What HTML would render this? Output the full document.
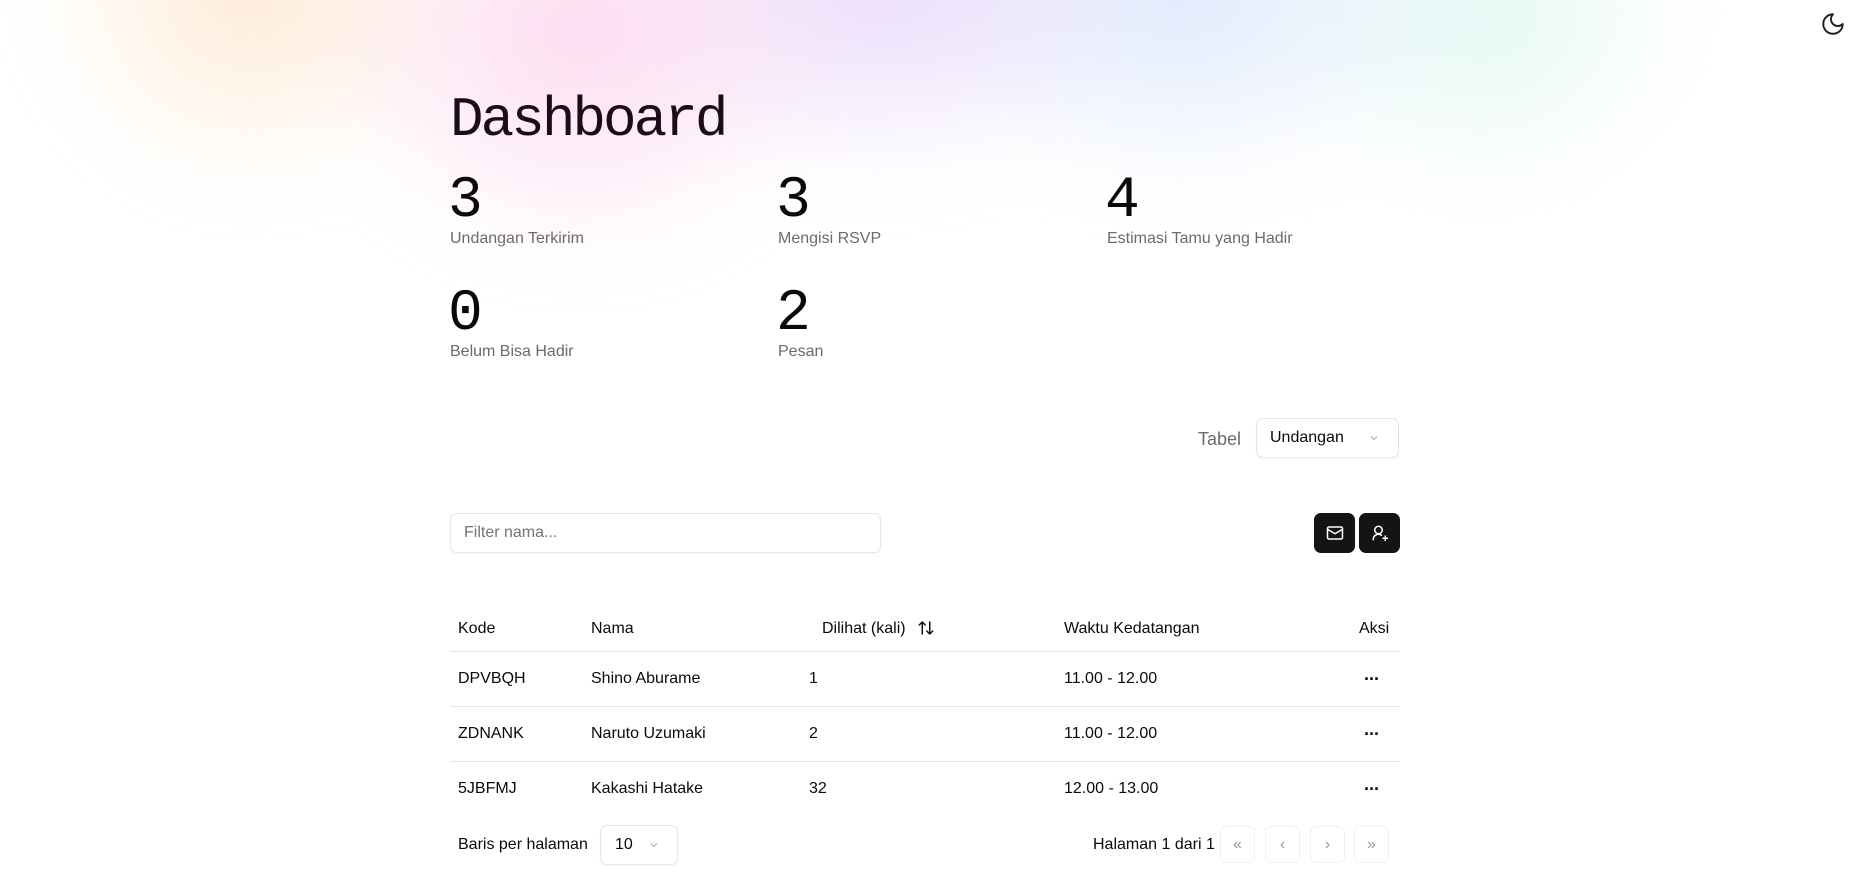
<!DOCTYPE html>
<html><head><meta charset="utf-8"><style>
*{box-sizing:border-box;margin:0;padding:0}
body{width:1857px;height:877px;overflow:hidden;background:#fff;font-family:"Liberation Sans",sans-serif;color:#0a0a0a;position:relative}
.bg{position:absolute;left:0;top:-60px;width:1857px;height:937px;pointer-events:none;
background:
radial-gradient(ellipse 300px 300px at 250px 40px,rgba(255,225,195,.7),transparent 72%),
radial-gradient(ellipse 380px 330px at 580px 90px,rgba(252,210,236,.8),transparent 72%),
radial-gradient(ellipse 380px 290px at 880px 40px,rgba(230,212,250,.85),transparent 72%),
radial-gradient(ellipse 380px 290px at 1180px 50px,rgba(214,228,252,.8),transparent 72%),
radial-gradient(ellipse 300px 260px at 1480px 70px,rgba(218,245,240,.75),transparent 72%);
filter:blur(30px)}
.abs{position:absolute}
.mono{font-family:"Liberation Mono","DejaVu Sans Mono",monospace}
h1{position:absolute;left:450px;top:88px;font-size:56px;font-weight:400;color:#1c0c16;letter-spacing:-3px}
.num{position:absolute;font-size:58px;line-height:58px}
.lbl{position:absolute;font-size:16px;color:#6b6b6b}
.box{position:absolute;border:1px solid #e5e5e5;border-radius:7px;background:#fff;box-shadow:0 1px 2px rgba(0,0,0,.04)}
.t{position:absolute;font-size:16px}
.line{position:absolute;left:450px;width:950px;height:1px;background:#e5e5e5}
.btn{position:absolute;background:#141414;border-radius:7px;width:41px;height:40px;top:513px;display:flex;align-items:center;justify-content:center}
.pg{position:absolute;top:826px;width:35px;height:37px;border:1px solid #f0f0f0;border-radius:6px;color:#9a9a9a;font-size:16px;display:flex;align-items:center;justify-content:center}
.dots{position:absolute;left:1364px;font-size:18px;font-weight:700;letter-spacing:-1px}
</style></head><body>
<div class="bg"></div>
<svg class="abs" style="left:1820px;top:11px" width="26" height="26" viewBox="0 0 24 24" fill="none" stroke="#222" stroke-width="1.8" stroke-linecap="round" stroke-linejoin="round"><path d="M12 3a6 6 0 0 0 9 9 9 9 0 1 1-9-9Z"/></svg>
<h1 class="mono">Dashboard</h1>
<div class="num mono" style="left:448px;top:173px">3</div><div class="lbl" style="left:450px;top:230px">Undangan Terkirim</div>
<div class="num mono" style="left:776px;top:173px">3</div><div class="lbl" style="left:778px;top:230px">Mengisi RSVP</div>
<div class="num mono" style="left:1105px;top:173px">4</div><div class="lbl" style="left:1107px;top:230px">Estimasi Tamu yang Hadir</div>
<div class="num mono" style="left:448px;top:286px">0</div><div class="lbl" style="left:450px;top:343px">Belum Bisa Hadir</div>
<div class="num mono" style="left:776px;top:286px">2</div><div class="lbl" style="left:778px;top:343px">Pesan</div>

<div class="t" style="left:1198px;top:429px;color:#6b6b6b;font-size:18px">Tabel</div>
<div class="box" style="left:1256px;top:418px;width:143px;height:40px"></div>
<div class="t" style="left:1270px;top:429px">Undangan</div>
<svg class="abs" style="left:1368px;top:432px" width="12" height="12" viewBox="0 0 24 24" fill="none" stroke="#aaa" stroke-width="2"><path d="m6 9 6 6 6-6"/></svg>

<div class="box" style="left:450px;top:513px;width:431px;height:40px"></div>
<div class="t" style="left:464px;top:524px;color:#737373">Filter nama...</div>
<div class="btn" style="left:1314px"><svg width="18" height="18" viewBox="0 0 24 24" fill="none" stroke="#fff" stroke-width="2" stroke-linecap="round" stroke-linejoin="round"><rect x="2" y="4" width="20" height="16" rx="2"/><path d="m22 7-10 6L2 7"/></svg></div>
<div class="btn" style="left:1359px"><svg width="18" height="18" viewBox="0 0 24 24" fill="none" stroke="#fff" stroke-width="2" stroke-linecap="round" stroke-linejoin="round"><circle cx="10" cy="8" r="5"/><path d="M3 21a7 7 0 0 1 11-6"/><path d="M19 16v6M16 19h6"/></svg></div>

<div class="t" style="left:458px;top:620px;font-weight:500">Kode</div>
<div class="t" style="left:591px;top:620px">Nama</div>
<div class="t" style="left:822px;top:620px">Dilihat (kali)</div>
<svg class="abs" style="left:917px;top:619px" width="18" height="18" viewBox="0 0 24 24" fill="none" stroke="#111" stroke-width="2" stroke-linecap="round" stroke-linejoin="round"><path d="M7 20V4M3 8l4-4 4 4M17 4v16M13 16l4 4 4-4"/></svg>
<div class="t" style="left:1064px;top:620px">Waktu Kedatangan</div>
<div class="t" style="left:1359px;top:620px">Aksi</div>
<div class="line" style="top:651px"></div>
<div class="line" style="top:706px"></div>
<div class="line" style="top:761px"></div>

<div class="t" style="left:458px;top:670px">DPVBQH</div><div class="t" style="left:591px;top:670px">Shino Aburame</div><div class="t" style="left:809px;top:670px">1</div><div class="t" style="left:1064px;top:670px">11.00 - 12.00</div><div class="dots" style="top:669px">···</div>
<div class="t" style="left:458px;top:725px">ZDNANK</div><div class="t" style="left:591px;top:725px">Naruto Uzumaki</div><div class="t" style="left:809px;top:725px">2</div><div class="t" style="left:1064px;top:725px">11.00 - 12.00</div><div class="dots" style="top:724px">···</div>
<div class="t" style="left:458px;top:780px">5JBFMJ</div><div class="t" style="left:591px;top:780px">Kakashi Hatake</div><div class="t" style="left:809px;top:780px">32</div><div class="t" style="left:1064px;top:780px">12.00 - 13.00</div><div class="dots" style="top:779px">···</div>

<div class="t" style="left:458px;top:836px">Baris per halaman</div>
<div class="box" style="left:600px;top:825px;width:78px;height:40px"></div>
<div class="t" style="left:615px;top:836px">10</div>
<svg class="abs" style="left:648px;top:839px" width="12" height="12" viewBox="0 0 24 24" fill="none" stroke="#aaa" stroke-width="2"><path d="m6 9 6 6 6-6"/></svg>
<div class="t" style="left:1093px;top:836px">Halaman 1 dari 1</div>
<div class="pg" style="left:1220px">«</div>
<div class="pg" style="left:1265px">‹</div>
<div class="pg" style="left:1310px">›</div>
<div class="pg" style="left:1354px">»</div>
</body></html>
